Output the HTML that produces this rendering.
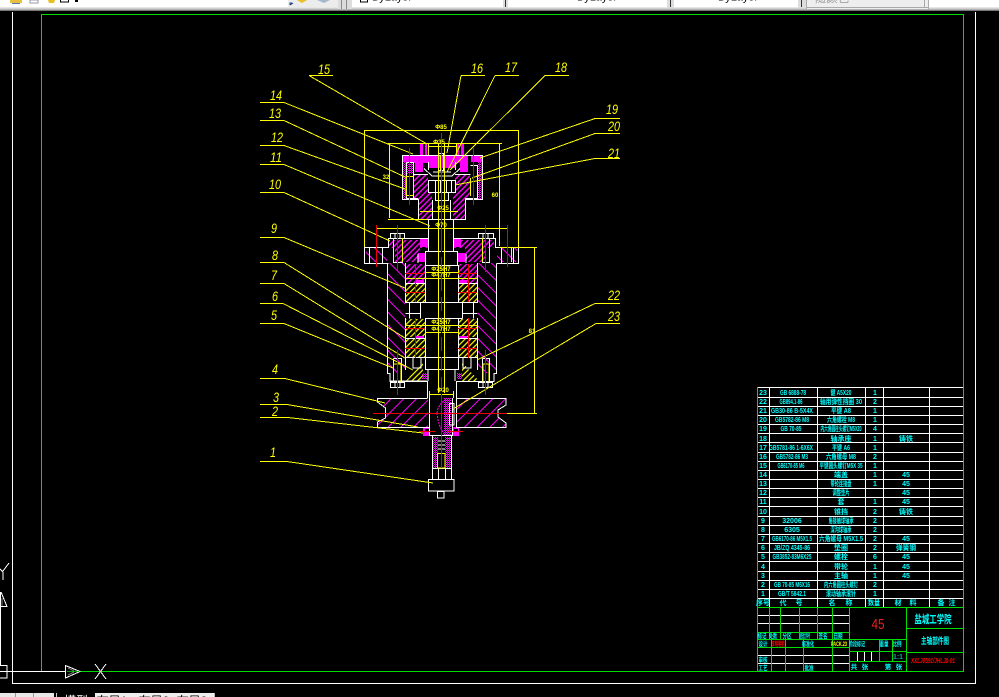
<!DOCTYPE html>
<html><head><meta charset="utf-8"><style>
html,body{margin:0;padding:0;background:#000;width:999px;height:697px;overflow:hidden}
svg{display:block;position:absolute;left:0;top:0}
text{font-family:"Liberation Sans","Noto Sans CJK SC",sans-serif}
.l text{font-style:italic;font-size:14px;fill:#ff0}
.d text{font-size:6px;fill:#ff0;font-weight:bold;text-anchor:middle}
.t text{font-size:7px;fill:#0ff;font-weight:bold;text-anchor:middle}
.s text{font-size:6.5px;fill:#0ff;font-weight:bold;text-anchor:middle}
</style></head><body>
<svg width="999" height="697" viewBox="0 0 999 697" xmlns="http://www.w3.org/2000/svg">
<defs>
<pattern id="hb" width="9" height="9" patternUnits="userSpaceOnUse" patternTransform="rotate(45)"><rect width="9" height="1" fill="#f0f"/></pattern>
<pattern id="hf" width="9" height="9" patternUnits="userSpaceOnUse" patternTransform="rotate(-45)"><rect width="9" height="1" fill="#f0f"/></pattern>
<pattern id="hs" width="4" height="4" patternUnits="userSpaceOnUse" patternTransform="rotate(-45)"><rect width="4" height="1.4" fill="#f0f"/></pattern>
<pattern id="hy" width="4" height="4" patternUnits="userSpaceOnUse" patternTransform="rotate(-45)"><rect width="4" height="1.2" fill="#ff0"/></pattern>
<pattern id="dn" width="2" height="2" patternUnits="userSpaceOnUse"><rect width="1" height="1" fill="#f0f"/><rect x="1" y="1" width="1" height="1" fill="#f0f"/></pattern>
</defs>
<rect width="999" height="697" fill="#000"/>

<!-- top toolbar -->
<rect width="999" height="7" fill="#fff"/>
<rect y="7" width="999" height="1" fill="#e6e6e6"/><rect y="8" width="999" height="1" fill="#d0d0d0"/><rect y="9" width="999" height="1" fill="#b4b4b4"/><rect y="10" width="999" height="1" fill="#777"/>
<rect x="288" y="0" width="50" height="7" fill="#ececec"/>
<rect x="338" y="0" width="14" height="9" fill="#dcdcdc"/><rect x="341" y="0" width="1" height="9" fill="#888"/><rect x="346" y="0" width="1" height="9" fill="#888"/>
<rect x="503" y="0" width="5" height="8" fill="#ddd"/><rect x="505" y="0" width="1" height="7" fill="#333"/>
<rect x="667" y="0" width="7" height="8" fill="#ddd"/><rect x="670" y="0" width="1" height="7" fill="#333"/>
<rect x="798" y="0" width="8" height="8" fill="#ddd"/><rect x="801" y="0" width="1" height="7" fill="#333"/>
<rect x="806" y="0" width="122" height="9" fill="#eee"/><rect x="806" y="0" width="1" height="9" fill="#aaa"/><rect x="924" y="0" width="1" height="7" fill="#aaa"/><rect x="928" y="0" width="1" height="9" fill="#aaa"/><rect x="806" y="7" width="123" height="1" fill="#aaa"/>
<rect x="10" y="0" width="12" height="3" fill="#e8c040"/><rect x="12" y="3" width="8" height="1" fill="#5577aa"/>
<rect x="30" y="0" width="8" height="3" fill="#fff" stroke="#99a" stroke-width="1"/>
<path d="M48 0h7l-1 3h-5z" fill="#e8c020"/>
<rect x="60.500" y="-1" width="8" height="3" fill="#fff" stroke="#000"/>
<rect x="75" y="0" width="3" height="2" fill="#000"/>
<path d="M297 0h10l-5 3z" fill="#e8c020"/><path d="M317 0h13l-6 3z" fill="#a4b8cc"/>
<path d="M290 5l3-2M290 5v-2h2" stroke="#1a3a80" fill="none"/>
<rect x="360.500" y="-1" width="7" height="3" fill="#fff" stroke="#000"/>
<text x="392" y="0.500" font-size="11" text-anchor="middle" fill="#000" textLength="40">ByLayer</text>
<text x="597" y="0.500" font-size="11" text-anchor="middle" fill="#000" textLength="40">ByLayer</text>
<text x="738" y="0.500" font-size="11" text-anchor="middle" fill="#000" textLength="40">ByLayer</text>
<text x="832" y="2" font-size="11" text-anchor="middle" fill="#999" textLength="34">随颜色</text>

<!-- bottom tabs -->
<rect y="693" x="0" width="54" height="4" fill="#e8e8e8"/><rect x="15" y="693" width="1" height="4" fill="#999"/><rect x="33" y="693" width="1" height="4" fill="#999"/>
<rect x="56" y="693" width="1" height="4" fill="#ccc"/>
<text x="76" y="705" font-size="12" fill="#fff" text-anchor="middle">模型</text>
<rect x="95" y="693" width="119" height="4" fill="#eee"/>
<text x="112" y="705" font-size="12" fill="#000" text-anchor="middle">布局1</text>
<text x="154" y="705" font-size="12" fill="#000" text-anchor="middle">布局2</text>
<text x="192" y="705" font-size="12" fill="#000" text-anchor="middle">布局3</text>
<rect x="214" y="693" width="1" height="4" fill="#bbb"/>

<g shape-rendering="crispEdges" fill="none">
<!-- frames -->
<path d="M12.500 12V683.500H975.500V12" stroke="#fff"/>
<path d="M41.500 671V14.500H963.500V671.500H80" stroke="#0d0"/>
<path d="M0 671.500H65M41 671.500h1" stroke="#fff"/>
<!-- ucs -->
<path d="M65.500 665.500L80 671.500L65.500 678Z" stroke="#fff"/><path d="M67 671.500h12" stroke="#0a0"/><path d="M68 668l6 3M68 675l6-3" stroke="#888"/>
<path d="M95 664L106 679M106 664L95 679" stroke="#fff"/>
<path d="M9 563L3 571M0 569l3 3v8" stroke="#fff"/>
<path d="M1 592L7 606.500H1M.5 592V665.500H7V678H0" stroke="#fff"/><path d="M2 598v8" stroke="#777"/>

<!-- hatched fills -->
<path d="M388 263H405V373H388Z" fill="url(#hb)"/>
<path d="M478 263H496V373H478Z" fill="url(#hb)"/>
<path d="M366 248H387V262H366Z" fill="url(#hb)"/>
<path d="M497 248H517V262H497Z" fill="url(#hb)"/>
<path d="M389 240H428V248H420V262H405V262H395V248H389Z" fill="url(#hs)"/>
<path d="M453 240H494V248H486V262H477V262H465V248H453Z" fill="url(#hs)"/>
<path d="M377 398H428V427H377V422L385 418V408L377 402Z" fill="url(#hf)"/>
<path d="M456 398H506V405L498 410V417L506 423V427H456Z" fill="url(#hf)"/>
<!-- magenta blocks -->
<rect x="402" y="155" width="11" height="7" fill="#f0f"/><rect x="402" y="162" width="4" height="37" fill="url(#dn)"/><rect x="402" y="162" width="11" height="12" fill="url(#dn)"/>
<rect x="471" y="155" width="11" height="7" fill="#f0f"/><rect x="478" y="162" width="4" height="37" fill="url(#dn)"/>
<path d="M413 155H468V162L455 163V168H428V163H413Z" fill="#f0f"/>
<rect x="420" y="143" width="3" height="13" fill="#f0f"/><rect x="425" y="143" width="2" height="13" fill="#f0f"/><rect x="457" y="143" width="2" height="13" fill="#f0f"/><rect x="461" y="143" width="3" height="13" fill="#f0f"/>
<rect x="415" y="160" width="8" height="12" fill="#f0f"/><rect x="460" y="160" width="8" height="12" fill="#f0f"/>
<path d="M413 175H428V192L432 192V219H418V199H413Z" fill="url(#hs)"/>
<path d="M455 175H470V199H465V219H453V192H455Z" fill="url(#hs)"/>
<rect x="418" y="253" width="8" height="9" fill="#f0f"/><rect x="457" y="253" width="8" height="9" fill="#f0f"/>
<rect x="420" y="239" width="8" height="8" fill="#f0f"/><rect x="453" y="239" width="8" height="8" fill="#f0f"/>
<rect x="406" y="264" width="19" height="19" fill="url(#hs)"/><rect x="458" y="264" width="19" height="19" fill="url(#hs)"/>
<rect x="405" y="284" width="20" height="18" fill="url(#hy)"/><rect x="458" y="284" width="19" height="18" fill="url(#hy)"/>
<rect x="405" y="319" width="20" height="18" fill="url(#hy)"/><rect x="458" y="319" width="19" height="18" fill="url(#hy)"/>
<rect x="405" y="339" width="20" height="18" fill="url(#hy)"/><rect x="458" y="339" width="19" height="18" fill="url(#hy)"/>
<rect x="416" y="336" width="8" height="3" fill="#f0f"/><rect x="459" y="336" width="8" height="3" fill="#f0f"/><rect x="416" y="280" width="8" height="3" fill="#f0f"/><rect x="459" y="280" width="8" height="3" fill="#f0f"/>
<path d="M405 382L423 362V382Z" fill="url(#hy)"/><path d="M462 362L480 382H462Z" fill="url(#hy)"/>
<rect x="422" y="373" width="5" height="6" fill="url(#dn)"/><rect x="457" y="373" width="5" height="6" fill="url(#dn)"/>
<rect x="444" y="398" width="7" height="37" fill="url(#dn)"/><path d="M437 413Q438 405 445 400M437 413Q438 425 444 434" stroke="#f0f" stroke-dasharray="2 1"/>
<rect x="423" y="427" width="7" height="9" fill="#f0f"/><rect x="452" y="427" width="7" height="9" fill="#f0f"/><rect x="425" y="429" width="4" height="3" fill="#000"/><rect x="454" y="429" width="4" height="3" fill="#000"/>
<rect x="432" y="437" width="6" height="31" fill="url(#dn)"/><rect x="445" y="437" width="6" height="31" fill="url(#dn)"/>

<!-- white outlines -->
<g stroke="#fff">
<path d="M402.500 155.500H482.500V199.500H465.500V219.500H418.500V199.500H402.500Z"/>
<path d="M406.500 162.500H413.500V198M470.500 165.500H477.500V198M406.500 162.500V198.500H418M477.500 165V198.500H465"/>
<path d="M428.500 180.500H455.500V192.500H428.500ZM435.500 180V192M440.500 180V192M446.500 180V192M451.500 180V192M435.500 192.500V200.500H448.500V192.500"/>
<path d="M413.500 174.500H428M455 174.500H470.500M424 168.500L432 176H452L460 168.500"/>
<path d="M428.500 162V170M455.500 162V170M433 172h18"/>
<path d="M428.500 219.500V251.500M453.500 219.500V251.500M432.500 200V219M450.500 200V219"/>
<path d="M388.500 263.500H364.500V247.500H388.500V238.500H428.500M453.500 238.500H495.500V247.500H518.500V263.500H496.500"/>
<path d="M369.500 247.500V263.500M382.500 247.500V263.500M501.500 247.500V263.500M513.500 247.500V263.500"/>
<path d="M390.500 233.500H404.500V238.500H390.500ZM395 233v5M400 233v5M393.500 238.500V262.500H402.500V238.500"/>
<path d="M478.500 233.500H493.500V238.500H478.500ZM483 233v5M488 233v5M482.500 238.500V262.500H489.500V238.500"/>
<path d="M387.500 263.500V373.500H390V381.500H427.500V398M496.500 263.500V373.500H494V381.500H456.500V398M427 381h-37"/>
<path d="M405.500 263V302.500H425M477.500 263V302.500H458M425.500 251.500H457.500V265.500H425.500ZM425.500 265V302M458.500 265V302"/>
<path d="M418 254v9M466 254v9M405.500 283.500H425.500M458.500 283.500H477.500M415.500 284V302M468.500 284V302"/>
<path d="M409.500 302.500V318.500M420.500 302.500V318.500M462.500 302.500V318.500M473.500 302.500V318.500M420.500 302.500H462.500M405.500 313.500H420M462 313.500H477.500M405.500 318V338.500H425M477.500 318V338.500H458M405.500 338.500V357.500H425.500V318.500H462.500M458.500 318.500V357.500H477.500V338"/>
<path d="M415.500 319V337M468.500 319V337M415.500 339V357M468.500 339V357"/>
<path d="M425.500 357.500H458.500V369.500H425.500ZM405.500 357V370M477.500 357V370M413 358v10h8v-10M463 358v10h8v-10"/>
<path d="M428 369V381M455 369V381"/>
<path d="M390.500 382.500H404.500V387.500H390.500ZM395 382v5M400 382v5M393.500 358.500H401.500V382M393.500 358.500V382"/>
<path d="M478.500 382.500H492.500V387.500H478.500ZM483 382v5M488 382v5M482.500 358.500H489.500V382M482.500 358.500V382"/>
<path d="M377 398.500H427.500M456.500 398.500H506V405L498 410V417L506 423V427.500H456.500V398M377.500 398V402L385.500 408V418L377.500 422V427.500H429"/>
<path d="M429.500 398V435.500H452.500V398M449.500 403.500H454V425H449.500Z"/>
<path d="M432.500 436V479M451.500 436V479M438.500 468V479M445.500 468V479M432 468.500H451M438 445h7M438 441h7M438 449h7"/>
<rect x="428.500" y="479.500" width="25.500" height="11.500"/>
<rect x="437.500" y="491.500" width="6.500" height="6.500"/>
<rect x="438.500" y="153.500" width="5" height="17"/>
</g>

<!-- yellow internal -->
<g stroke="#ff0">
<path d="M438.500 143V393M444.500 143V393"/>
<rect x="440" y="155" width="2" height="15" fill="#ff0" stroke="none"/>
<path d="M406.500 176.500H413.500V195.500H406.500ZM470.500 178V196M406 176V195"/>
<path d="M393.500 238V262M402.500 238V262M482.500 238V262M489.500 238V262M511.500 248V262"/>
<path d="M393.500 364V382M401 364V382M483 364V382M489 364V382M393 364h8M483 364h6"/>
<path d="M437.500 453.500H445V468H437.500Z"/>
<!-- dimensions -->
<path d="M365 130.500H518M364.500 130V247M518.500 130V247"/>
<path d="M388 143.500H502M389.500 143V218M388 219.500H428M499.500 143V246"/>
<path d="M428 146.500H456M428.500 143V155M456.500 143V155"/>
<path d="M420 211.500H458"/>
<path d="M376 228.500H507M376.500 228V247M507.500 228V247"/>
<path d="M500 247.500H537M534.500 247V413M507 413.500H537"/>
<path d="M425 272.500H458M425.500 270V275M458.500 270V275M405 278.500H477"/>
<path d="M405 325.500H477M425 332.500H458M425.500 330V335M458.500 330V335"/>
<path d="M429 394.500H453M429.500 391V398M453.500 391V398"/>
<!-- leaders -->
<path d="M309 75.500H333M309 75.500L427 144"/>
<path d="M461 75.500H485M461 75.500L447 153"/>
<path d="M495 75.500H519M495 75.500L447 172"/>
<path d="M545 75.500H569M545 75.500L450 170"/>
<path d="M260 102.500H284L413 154"/>
<path d="M260 120.500H284L405 177"/>
<path d="M260 145.500H284L405 189"/>
<path d="M260 164.500H284L430 226"/>
<path d="M260 192.500H284L390 241"/>
<path d="M260 237.500H284L405 288"/>
<path d="M260 262.500H284L405 338"/>
<path d="M260 283.500H284L405 358"/>
<path d="M260 303.500H283L413 370"/>
<path d="M260 323.500H284L393 368"/>
<path d="M260 378.500H285L385 403"/>
<path d="M260 404.500H287L418 427"/>
<path d="M260 417.500H288L423 433"/>
<path d="M260 461.500H287L433 483"/>
<path d="M620 118.500H595L480 158"/>
<path d="M620 133.500H595L472 178"/>
<path d="M620 158.500H595L455 185"/>
<path d="M620 303.500H595L477 360"/>
<path d="M620 323.500H596L453 409"/>
</g>

<!-- red centerlines -->
<g stroke="#e00">
<path d="M441.500 133V468M409.500 148V205M473.500 148V205M376.500 225V267M507.500 225V267M397.500 225V272M485.500 225V272"/>
<path d="M405 273.500H425M458 273.500H477M405 292.500H425M458 292.500H477M405 328.500H425M458 328.500H477M405 348.500H425M458 348.500H477"/>
<path d="M415.500 264V302M468.500 264V302M415.500 318V358M468.500 318V358"/>
<path d="M397.500 350V395M485.500 350V395"/>
<path d="M373 413.500H507M419 431.500H435M448 431.500H463"/>
</g>
<path d="M507 413.500H534" stroke="#ff0"/>
<path d="M441.500 251V395" stroke="#000" stroke-dasharray="6 14"/>

<!-- table -->
<g stroke="#fff">
<path d="M757 387.500H963M757 397.500H963M757 406.500H963M757 415.500H963M757 424.500H963M757 433.500H963M757 442.500H963M757 452.500H963M757 461.500H963M757 470.500H963M757 479.500H963M757 488.500H963M757 497.500H963M757 506.500H963M757 516.500H963M757 525.500H963M757 534.500H963M757 543.500H963M757 552.500H963M757 561.500H963M757 571.500H963M757 580.500H963M757 589.500H963M757 598.500H963"/>
<path d="M769.500 387V607M817.500 387V607M865.500 387V607M883.500 387V607M929.500 387V607"/>
<path d="M757 615.500H849M757 623.500H849M757 655.500H849M757 663.500H849"/>
<path d="M857.500 651V661M864.500 651V661M871.500 651V661"/>
</g>
<g stroke="#0d0">
<path d="M757.500 387V671M757 607.500H963M849.500 607V671M906.500 607V671"/>
<path d="M757 632.500H849M757 639.500H906M757 647.500H849M849 651.500H906M849 661.500H906M906 628.500H963M906 652.500H963"/>
<path d="M769.500 607V639M780.500 607V639M799.500 607V639M817.500 607V639M832.500 607V639"/>
<path d="M771.500 639V671M785.500 639V671M803.500 639V671M832.500 639V671"/>
<path d="M879.500 639V661M892.500 639V661"/>
</g>
</g>

<!-- leader labels -->
<g class="l">
<text x="318" y="74" textLength="12" lengthAdjust="spacingAndGlyphs">15</text>
<text x="471" y="73" textLength="12" lengthAdjust="spacingAndGlyphs">16</text>
<text x="505" y="72" textLength="12" lengthAdjust="spacingAndGlyphs">17</text>
<text x="555" y="72" textLength="12" lengthAdjust="spacingAndGlyphs">18</text>
<text x="270" y="100" textLength="12" lengthAdjust="spacingAndGlyphs">14</text>
<text x="269" y="118" textLength="12" lengthAdjust="spacingAndGlyphs">13</text>
<text x="271" y="142" textLength="12" lengthAdjust="spacingAndGlyphs">12</text>
<text x="270" y="162" textLength="12" lengthAdjust="spacingAndGlyphs">11</text>
<text x="269" y="189" textLength="12" lengthAdjust="spacingAndGlyphs">10</text>
<text x="271" y="233" textLength="6" lengthAdjust="spacingAndGlyphs">9</text>
<text x="272" y="260" textLength="6" lengthAdjust="spacingAndGlyphs">8</text>
<text x="271" y="280" textLength="6" lengthAdjust="spacingAndGlyphs">7</text>
<text x="272" y="301" textLength="6" lengthAdjust="spacingAndGlyphs">6</text>
<text x="271" y="320" textLength="6" lengthAdjust="spacingAndGlyphs">5</text>
<text x="272" y="374" textLength="6" lengthAdjust="spacingAndGlyphs">4</text>
<text x="273" y="402" textLength="6" lengthAdjust="spacingAndGlyphs">3</text>
<text x="272" y="416" textLength="6" lengthAdjust="spacingAndGlyphs">2</text>
<text x="270" y="457" textLength="6" lengthAdjust="spacingAndGlyphs">1</text>
<text x="606" y="114" textLength="12" lengthAdjust="spacingAndGlyphs">19</text>
<text x="608" y="131" textLength="12" lengthAdjust="spacingAndGlyphs">20</text>
<text x="608" y="158" textLength="12" lengthAdjust="spacingAndGlyphs">21</text>
<text x="608" y="300" textLength="12" lengthAdjust="spacingAndGlyphs">22</text>
<text x="608" y="321" textLength="12" lengthAdjust="spacingAndGlyphs">23</text>
</g>

<!-- dim text -->
<g class="d">
<text x="441" y="129">Φ85</text>
<text x="439" y="144">Φ35</text>
<text x="443" y="210">Φ25</text>
<text x="441" y="227">Φ70</text>
<text x="441" y="271">Φ25H7</text>
<text x="441" y="277">Φ47H7</text>
<text x="441" y="324">Φ25H7</text>
<text x="441" y="331">Φ47H7</text>
<text x="443" y="392">Φ20</text>
<text x="386" y="179">32</text>
<text x="495" y="197">60</text>
<text x="532" y="333">81</text>
</g>

<!-- table text -->
<g class="t">
<text x="763" y="395">23</text><text x="793" y="395" textLength="26" lengthAdjust="spacingAndGlyphs">GB 6888-78</text><text x="841" y="395" textLength="21" lengthAdjust="spacingAndGlyphs">键 A5X20</text><text x="875" y="395">1</text>
<text x="763" y="404">22</text><text x="791" y="404" textLength="23" lengthAdjust="spacingAndGlyphs">GB894.1-86</text><text x="841" y="404" textLength="42" lengthAdjust="spacingAndGlyphs">轴用弹性挡圈 30</text><text x="875" y="404">2</text>
<text x="763" y="413">21</text><text x="792" y="413" textLength="42" lengthAdjust="spacingAndGlyphs">GB30-86 B-5X4X</text><text x="841" y="413" textLength="20" lengthAdjust="spacingAndGlyphs">平键 A8</text><text x="875" y="413">1</text>
<text x="763" y="422">20</text><text x="792" y="422" textLength="34" lengthAdjust="spacingAndGlyphs">GB5782-86 M8</text><text x="841" y="422" textLength="28" lengthAdjust="spacingAndGlyphs">六角螺栓 M8</text><text x="875" y="422">1</text>
<text x="763" y="431">19</text><text x="791" y="431" textLength="21" lengthAdjust="spacingAndGlyphs">GB 70-85</text><text x="841" y="431" textLength="41" lengthAdjust="spacingAndGlyphs">内六角圆柱头螺钉M5X20</text><text x="875" y="431">4</text>
<text x="763" y="441">18</text><text x="841" y="441">轴承座</text><text x="875" y="441">1</text><text x="906" y="441">铸铁</text>
<text x="763" y="450">17</text><text x="791" y="450" textLength="44" lengthAdjust="spacingAndGlyphs">GB5781-86 1-6X6X</text><text x="841" y="450" textLength="18" lengthAdjust="spacingAndGlyphs">平键 A6</text><text x="875" y="450">1</text>
<text x="763" y="459">16</text><text x="792" y="459" textLength="32" lengthAdjust="spacingAndGlyphs">GB5782-86 M3</text><text x="841" y="459" textLength="30" lengthAdjust="spacingAndGlyphs">六角螺母 M8</text><text x="875" y="459">2</text>
<text x="763" y="468">15</text><text x="791" y="468" textLength="27" lengthAdjust="spacingAndGlyphs">GB6170-85 M6</text><text x="841" y="468" textLength="43" lengthAdjust="spacingAndGlyphs">平键圆头螺钉M5X 35</text><text x="875" y="468">1</text>
<text x="763" y="477">14</text><text x="841" y="477">端盖</text><text x="875" y="477">1</text><text x="906" y="477">45</text>
<text x="763" y="486">13</text><text x="841" y="486" textLength="21" lengthAdjust="spacingAndGlyphs">带轮连接盘</text><text x="875" y="486">1</text><text x="906" y="486">45</text>
<text x="763" y="495">12</text><text x="841" y="495" textLength="17" lengthAdjust="spacingAndGlyphs">调整垫片</text><text x="906" y="495">45</text>
<text x="763" y="504">11</text><text x="841" y="504">套</text><text x="875" y="504">1</text><text x="906" y="504">45</text>
<text x="763" y="514">10</text><text x="841" y="514">锥挡</text><text x="875" y="514">2</text><text x="906" y="514">铸铁</text>
<text x="763" y="523">9</text><text x="792" y="523">32006</text><text x="841" y="523" textLength="25" lengthAdjust="spacingAndGlyphs">角接触球轴承</text><text x="875" y="523">2</text>
<text x="763" y="532">8</text><text x="792" y="532">6305</text><text x="841" y="532" textLength="21" lengthAdjust="spacingAndGlyphs">深沟球轴承</text><text x="875" y="532">2</text>
<text x="763" y="541">7</text><text x="792" y="541" textLength="40" lengthAdjust="spacingAndGlyphs">GB6170-86 M5X1.5</text><text x="841" y="541" textLength="44" lengthAdjust="spacingAndGlyphs">六角螺母 M5X1.5</text><text x="875" y="541">2</text><text x="906" y="541">45</text>
<text x="763" y="550">6</text><text x="792" y="550" textLength="36" lengthAdjust="spacingAndGlyphs">JB/ZQ 4345-86</text><text x="841" y="550">垫圈</text><text x="875" y="550">2</text><text x="906" y="550" textLength="20" lengthAdjust="spacingAndGlyphs">弹簧钢</text>
<text x="763" y="559">5</text><text x="792" y="559" textLength="39" lengthAdjust="spacingAndGlyphs">GB3852-83M6X25</text><text x="841" y="559">螺栓</text><text x="875" y="559">6</text><text x="906" y="559">45</text>
<text x="763" y="569">4</text><text x="841" y="569">带轮</text><text x="875" y="569">1</text><text x="906" y="569">45</text>
<text x="763" y="578">3</text><text x="841" y="578">主轴</text><text x="875" y="578">1</text><text x="906" y="578">45</text>
<text x="763" y="587">2</text><text x="792" y="587" textLength="36" lengthAdjust="spacingAndGlyphs">GB 70-85 M6X16</text><text x="841" y="587" textLength="34" lengthAdjust="spacingAndGlyphs">内六角圆柱头螺钉</text><text x="875" y="587">2</text>
<text x="763" y="596">1</text><text x="792" y="596" textLength="28" lengthAdjust="spacingAndGlyphs">GB/T 5842.1</text><text x="841" y="596" textLength="30" lengthAdjust="spacingAndGlyphs">滚动轴承滚针</text><text x="875" y="596">1</text>
<text x="763" y="605">序号</text><text x="783" y="605">代</text><text x="799" y="605">号</text><text x="832" y="605">名</text><text x="849" y="605">称</text><text x="874" y="605" textLength="12" lengthAdjust="spacingAndGlyphs">数量</text><text x="898" y="605">材</text><text x="913" y="605">料</text><text x="941" y="605">备</text><text x="952" y="605">注</text>
</g>

<!-- title block -->
<g class="s">
<text x="762" y="638" textLength="9" lengthAdjust="spacingAndGlyphs">标记</text><text x="773" y="638" textLength="8" lengthAdjust="spacingAndGlyphs">处数</text><text x="787" y="638" textLength="9" lengthAdjust="spacingAndGlyphs">分区</text><text x="805" y="638" textLength="10" lengthAdjust="spacingAndGlyphs">更改文件号</text><text x="823" y="638" textLength="9" lengthAdjust="spacingAndGlyphs">签名</text><text x="838" y="638" textLength="9" lengthAdjust="spacingAndGlyphs">日期</text>
<text x="763" y="646" textLength="9" lengthAdjust="spacingAndGlyphs">设计</text><text x="808" y="646" textLength="12" lengthAdjust="spacingAndGlyphs">标准化</text>
<text x="763" y="662" textLength="9" lengthAdjust="spacingAndGlyphs">审核</text><text x="763" y="670" textLength="9" lengthAdjust="spacingAndGlyphs">工艺</text><text x="809" y="670" textLength="9" lengthAdjust="spacingAndGlyphs">批准</text>
<text x="857" y="646" textLength="16" lengthAdjust="spacingAndGlyphs">阶段标记</text><text x="884" y="646" textLength="9" lengthAdjust="spacingAndGlyphs">重量</text><text x="897" y="646" textLength="9" lengthAdjust="spacingAndGlyphs">比例</text>
<text x="854" y="669">共</text><text x="865" y="669">张</text><text x="888" y="669">第</text><text x="899" y="669">张</text>
</g>
<text x="898" y="659" font-size="7" fill="#0aa" text-anchor="middle" font-weight="bold">1:1</text>
<text x="778" y="646" font-size="6.500" fill="#f00" font-weight="bold" text-anchor="middle" textLength="13" lengthAdjust="spacingAndGlyphs">李明明明</text>
<text x="839" y="646" font-size="6" fill="#ff0" font-weight="bold" text-anchor="middle" textLength="16" lengthAdjust="spacingAndGlyphs">PACK.23</text>
<text x="878" y="629" font-size="15" fill="#e22" text-anchor="middle" textLength="13" lengthAdjust="spacingAndGlyphs">45</text>
<text x="933" y="623" font-size="11" fill="#0ff" font-weight="bold" text-anchor="middle" textLength="37" lengthAdjust="spacingAndGlyphs">盐城工学院</text>
<text x="935" y="644" font-size="9" fill="#0ff" font-weight="bold" text-anchor="middle" textLength="28" lengthAdjust="spacingAndGlyphs">主轴部件图</text>
<text x="933" y="663" font-size="7" fill="#f00" font-weight="bold" font-style="italic" text-anchor="middle" textLength="44" lengthAdjust="spacingAndGlyphs">XXLJ0591/JHLJ0-01</text>
</svg>
</body></html>
